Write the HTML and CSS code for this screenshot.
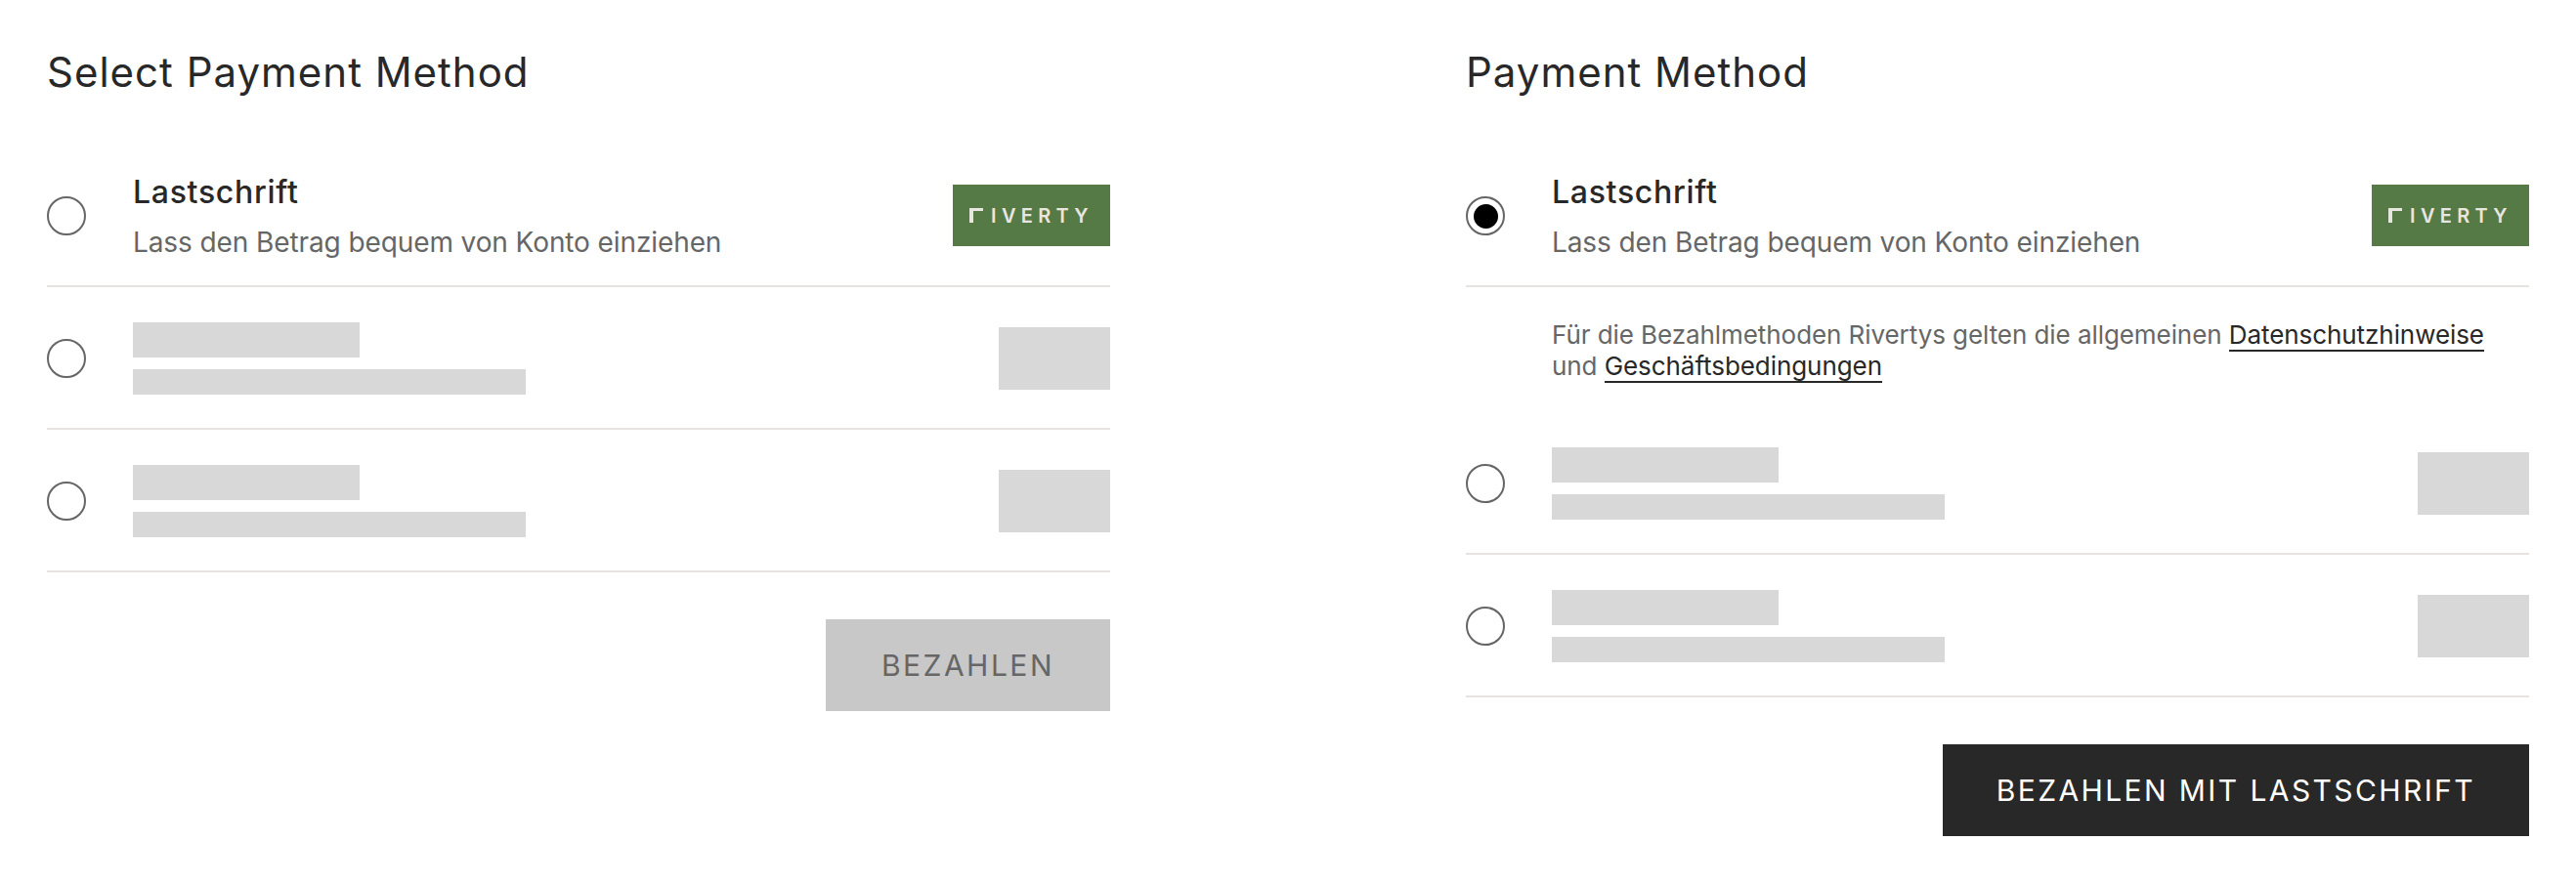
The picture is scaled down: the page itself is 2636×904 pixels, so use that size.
FILE: index.html
```html
<!DOCTYPE html>
<html lang="de">
<head>
    <meta charset="UTF-8">
    <meta name="viewport" content="width=device-width, initial-scale=1.0">
    <title>Payment Method</title>
    <link rel="stylesheet" href="styles.css">
</head>
<body>

    <div class="page">
        <section class="panel">
            <h2>Select Payment Method</h2>

            <div class="method">
                <span class="radio"></span>
                <div class="method-text">
                    <div class="method-name">Lastschrift</div>
                    <div class="method-desc">Lass den Betrag bequem von Konto einziehen</div>
                </div>
                <div class="logo"><span class="logo-r"></span>IVERTY</div>
            </div>

            <div class="method">
                <span class="radio"></span>
                <div class="method-text">
                    <div class="bar bar-name"></div>
                    <div class="bar bar-desc"></div>
                </div>
                <div class="bar bar-logo"></div>
            </div>

            <div class="method">
                <span class="radio"></span>
                <div class="method-text">
                    <div class="bar bar-name"></div>
                    <div class="bar bar-desc"></div>
                </div>
                <div class="bar bar-logo"></div>
            </div>

            <div class="actions">
                <button class="pay" disabled>BEZAHLEN</button>
            </div>
        </section>

        <section class="panel">
            <h2>Payment Method</h2>

            <div class="method">
                <span class="radio checked"></span>
                <div class="method-text">
                    <div class="method-name">Lastschrift</div>
                    <div class="method-desc">Lass den Betrag bequem von Konto einziehen</div>
                </div>
                <div class="logo"><span class="logo-r"></span>IVERTY</div>
            </div>

            <p class="note">Für die Bezahlmethoden Rivertys gelten die allgemeinen <a href="#">Datenschutzhinweise</a> und <a href="#">Geschäftsbedingungen</a></p>

            <div class="method">
                <span class="radio"></span>
                <div class="method-text">
                    <div class="bar bar-name"></div>
                    <div class="bar bar-desc"></div>
                </div>
                <div class="bar bar-logo"></div>
            </div>

            <div class="method">
                <span class="radio"></span>
                <div class="method-text">
                    <div class="bar bar-name"></div>
                    <div class="bar bar-desc"></div>
                </div>
                <div class="bar bar-logo"></div>
            </div>

            <div class="actions">
                <button class="pay">BEZAHLEN MIT LASTSCHRIFT</button>
            </div>
        </section>
    </div>

</body>
</html>
```

FILE: styles.css
```css
body {
    margin: 0;
    background-color: #fff;
    color: #282828;
    font-family: Inter, "Liberation Sans", sans-serif;
}
.page {
    display: grid;
    grid-template-columns: 1088px 1088px;
    column-gap: 364px;
    padding: 50px 48px 0;
}
h2 {
    margin: 0 0 50px;
    font-size: 42px;
    line-height: 48px;
    font-weight: 400;
    letter-spacing: 1px;
}
.method {
    box-sizing: border-box;
    display: flex;
    align-items: center;
    height: 146px;
    padding-top: 2px;
    border-bottom: 2px solid #e6e3e0;
}
.radio {
    flex: none;
    box-sizing: border-box;
    display: flex;
    align-items: center;
    justify-content: center;
    width: 40px;
    height: 40px;
    margin-right: 48px;
    border: 2px solid #666;
    border-radius: 50%;
}
.radio.checked::after {
    content: "";
    width: 25px;
    height: 25px;
    border-radius: 50%;
    background-color: #000;
}
.method-text {
    flex: 1;
}
.method-name {
    margin: 1px 0 13px;
    font-size: 32px;
    line-height: 40px;
    font-weight: 500;
    letter-spacing: 0.7px;
}
.method-desc {
    font-size: 28px;
    line-height: 36px;
    color: #666;
    letter-spacing: -0.1px;
}
.logo {
    flex: none;
    display: flex;
    align-items: center;
    justify-content: center;
    width: 161px;
    height: 63px;
    margin-bottom: 1px;
    background-color: #567a45;
    color: #e8e6e0;
    font-size: 20px;
    font-weight: 600;
    letter-spacing: 5.3px;
}
.logo-r {
    box-sizing: border-box;
    width: 14px;
    height: 15px;
    margin-right: 8px;
    border-top: 3px solid #e8e6e0;
    border-left: 4px solid #e8e6e0;
}
.bar {
    background-color: #d8d8d8;
}
.bar-name {
    width: 232px;
    height: 36px;
    margin-bottom: 12px;
}
.bar-desc {
    width: 402px;
    height: 26px;
}
.bar-logo {
    flex: none;
    width: 114px;
    height: 64px;
}
.note {
    margin: 0;
    padding: 33px 0 31px 88px;
    font-size: 26px;
    line-height: 32px;
    letter-spacing: -0.07px;
    color: #666;
}
.note a {
    color: #282828;
    text-decoration: none;
    border-bottom: 2px solid #282828;
}
.actions {
    display: flex;
    justify-content: flex-end;
    margin-top: 48px;
}
.pay {
    height: 94px;
    padding: 0 55px;
    border: none;
    background-color: #282828;
    color: #fff;
    font-family: inherit;
    font-size: 30px;
    letter-spacing: 2.4px;
}
.pay:disabled {
    padding: 0 57px;
    background-color: #c8c8c8;
    color: #666;
    letter-spacing: 2.5px;
}
```
